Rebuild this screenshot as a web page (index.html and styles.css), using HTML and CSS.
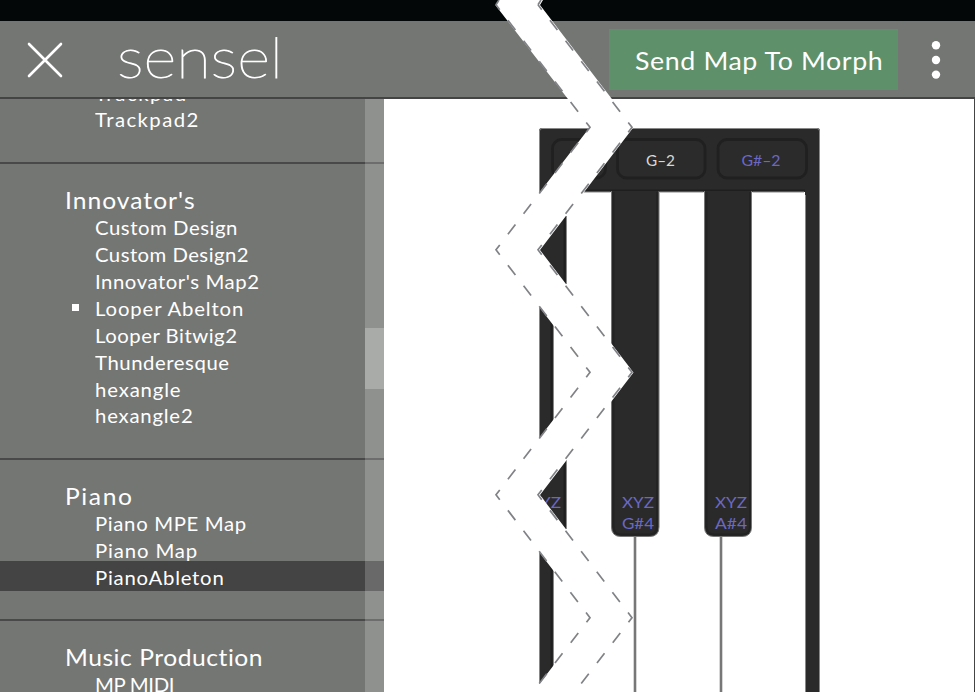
FILE: index.html
```html
<!DOCTYPE html>
<html lang="en">
<head>
<meta charset="utf-8">
<title>Sensel</title>
<link rel="stylesheet" href="styles.css">
</head>
<body>
<div class="app">
  <div class="topbar"></div>
  <header class="header">
    <svg class="close" width="36" height="36" viewBox="0 0 36 36"><path d="M2 2 34 34M34 2 2 34"/></svg>
    <svg class="logo" width="180" height="74" viewBox="0 0 180 74"><text x="0" y="56" textLength="166" lengthAdjust="spacingAndGlyphs">sensel</text></svg>
    <button class="send"><span data-width="247">Send Map To Morph</span></button>
    <svg class="more" width="10" height="40" viewBox="0 0 10 40"><circle cx="5" cy="5.2" r="4.2"/><circle cx="5" cy="20" r="4.2"/><circle cx="5" cy="34.6" r="4.2"/></svg>
  </header>
  <div class="body">
    <aside class="sidebar">
      <section class="group first">
        <ul>
          <li><span data-width="92">Trackpad</span></li>
          <li><span data-width="104">Trackpad2</span></li>
        </ul>
      </section>
      <section class="group">
        <h2><span data-width="130">Innovator's</span></h2>
        <ul>
          <li><span data-width="142">Custom Design</span></li>
          <li><span data-width="153">Custom Design2</span></li>
          <li><span data-width="164">Innovator's Map2</span></li>
          <li class="current"><span data-width="148">Looper Abelton</span></li>
          <li><span data-width="142">Looper Bitwig2</span></li>
          <li><span data-width="134">Thunderesque</span></li>
          <li><span data-width="85">hexangle</span></li>
          <li><span data-width="97">hexangle2</span></li>
        </ul>
      </section>
      <section class="group">
        <h2><span data-width="68">Piano</span></h2>
        <ul>
          <li><span data-width="151">Piano MPE Map</span></li>
          <li><span data-width="102">Piano Map</span></li>
          <li class="selected"><span data-width="129">PianoAbleton</span></li>
        </ul>
      </section>
      <section class="group">
        <h2><span data-width="198">Music Production</span></h2>
        <ul>
          <li><span data-width="78">MP MIDI</span></li>
        </ul>
      </section>
      <div class="scroll"><div class="thumb"></div></div>
    </aside>
    <main class="stage">
      <svg class="piano" width="590" height="593" viewBox="384 99 590 593">
        <path class="case" d="M539 192V131q0-3 3-3H817q3 0 3 3V692H805V192Z"/>
        <path class="case" d="M539 190H566V300H553V450H566V540H553V684H539Z"/>
        <path class="shade" d="M551.500 300V450M551.500 540V684M564.500 192V300M564.500 450V540M539 190.500H805"/>
        <path class="edge" d="M539.500 684V131q0-2.500 2.500-2.500H817q2.500 0 2.500 2.500V692M553.500 300V450M553.500 540V684M566.500 216V284M566.500 460V529M805.500 692V195"/>
        <rect class="pad" x="552.500" y="139.500" width="53" height="38.500" rx="9"/>
        <rect class="pad" x="617.500" y="139.500" width="87.500" height="38.500" rx="9"/>
        <rect class="pad" x="718" y="139.500" width="88.500" height="38.500" rx="9"/>
        <path class="gap" d="M635 530V692M721 530V692"/>
        <path class="key" d="M611.500 191V527q0 9.500 9.500 9.500H649.500q9.500 0 9.500-9.500V191"/>
        <path class="key" d="M704.500 191V527q0 9.500 9.500 9.500H742q9.500 0 9.500-9.500V191"/>
        <path class="shade soft" d="M613.500 192V526q0 8.500 8 8.500H649q8 0 8-8.500V192M706.500 192V526q0 8.500 8 8.500H742q8 0 8-8.500V192"/>
        <path class="edge" d="M566 192H610.500M660 192H703.500M752.500 192H804"/>
        <g class="label">
          <text class="light" x="646" y="166" textLength="29" lengthAdjust="spacingAndGlyphs">G–2</text>
          <text x="741.500" y="166" textLength="39" lengthAdjust="spacingAndGlyphs">G#–2</text>
          <text x="529" y="508" textLength="32" lengthAdjust="spacingAndGlyphs">XYZ</text>
          <text x="622" y="508" textLength="32" lengthAdjust="spacingAndGlyphs">XYZ</text>
          <text x="622" y="529" textLength="32" lengthAdjust="spacingAndGlyphs">G#4</text>
          <text x="715" y="508" textLength="32" lengthAdjust="spacingAndGlyphs">XYZ</text>
          <text x="715" y="529" textLength="32" lengthAdjust="spacingAndGlyphs">A#4</text>
        </g>
      </svg>
    </main>
  </div>
  <svg class="tear" width="975" height="692" viewBox="0 0 975 692">
    <path class="strip" d="M499 0 495.300 5 589.800 127.300 495.300 250 589.800 372.500 495.300 495 589.800 618 537 687H580L633.500 618 540 495 633.500 372.500 540 250 633.500 127.300 540 5 543 0Z"/>
    <path class="dash" d="M496 4.800 590 127.300 496 249.800 590 372.300 496 494.800 590 617.800 538 685"/>
    <path class="dash" d="M538 4.800 632 127.300 538 249.800 632 372.300 538 494.800 632 617.800 580 685"/>
    <path class="tick" d="M499 0 496 4.800M541 0 538 4.800"/>
  </svg>
</div>
<script src="fit.js"></script>
</body>
</html>
```
FILE: styles.css
```css
* { box-sizing: border-box; }
body {
  margin: 0;
  background: #fff;
  color: #fff;
  font-family: Lato, "Open Sans", sans-serif;
}
.app {
  position: relative;
  display: flex;
  flex-direction: column;
  width: 975px;
  height: 692px;
  overflow: hidden;
}
.topbar { flex: 0 0 21px; background: #030708; }
.header {
  flex: 0 0 78px;
  display: flex;
  align-items: center;
  padding: 0 38px 0 27px;
  background: #747674;
  border-bottom: 2px solid #444;
}
.close { fill: none; stroke: #fff; stroke-width: 2.6; stroke-linecap: round; margin-top: 2px; }
.logo { margin-left: 54px; }
.logo text { font-size: 56px; font-weight: 200; fill: #fff; stroke: #fff; stroke-width: .9; }
.send {
  width: 289px;
  height: 61px;
  margin: 0 0 0 auto;
  padding: 2px 0 0 26px;
  border: 0;
  background: #5e9069;
  color: #fff;
  font: 400 25px Lato, sans-serif;
  text-align: left;
  white-space: nowrap;
}
[data-width] {
  display: inline-block;
  transform: scaleX(1.07);
  transform-origin: 0 50%;
}
.more { margin-left: 33px; margin-top: 1px; fill: #fff; margin-right: -4px; }
.body { flex: 1; display: flex; min-height: 0; }
.sidebar {
  position: relative;
  width: 384px;
  overflow: hidden;
  background: #747674;
}
.group { border-top: 2px solid #484948; padding: 23px 0 28.500px; white-space: nowrap; }
.group.first { border: 0; padding-top: 0; margin-top: -19.500px; }
.group h2 {
  margin: 0;
  padding-left: 65px;
  font-size: 23px;
  font-weight: 400;
  line-height: 27px;
}
.group ul { margin: 0; padding: 0; list-style: none; }
.group li {
  position: relative;
  height: 26.950px;
  padding-left: 95px;
  font-size: 19px;
  line-height: 27px;
}
.current::before {
  content: "";
  position: absolute;
  left: 72px;
  top: 9px;
  width: 7px;
  height: 7px;
  background: #fff;
}
.group .selected {
  height: 30px;
  margin: -2.500px 0 -.500px;
  padding-top: 2.500px;
  background: #444;
}
.scroll {
  position: absolute;
  top: 0;
  right: 0;
  bottom: 0;
  width: 19px;
  padding-top: 229px;
  background: rgba(255, 255, 255, .2);
}
.thumb { height: 61px; background: rgba(255, 255, 255, .24); }
.stage { flex: 1; border-right: 1px solid #444; background: #fff; }
.piano { display: block; }
.case, .key { fill: #2a2a2a; }
.key { stroke: #777; stroke-width: 1; }
.shade { fill: none; stroke: #1e1e1e; stroke-width: 2; }
.shade.soft { stroke: #232323; }
.edge { fill: none; stroke: #888; stroke-width: 1; }
.pad { fill: #2b2b2b; stroke: #202020; stroke-width: 2.800; }
.gap { stroke: #777; stroke-width: 2.600; }
.label { font-size: 15.500px; fill: #6b68c4; }
.label .light { fill: #d8d8d8; }
.tear { position: absolute; inset: 0; pointer-events: none; }
.strip { fill: #fff; }
.dash { fill: none; stroke: #808285; stroke-width: 1.700; stroke-dasharray: 12.300 13.435; stroke-dashoffset: 6.150; }
.tick { stroke: #808285; stroke-width: 1.700; }
```
FILE: fit.js
```js
document.querySelectorAll('[data-width]').forEach(function (el) {
  var stretch = 1.07;
  var spacing = ((Number(el.dataset.width) + 1) / stretch - el.offsetWidth) / el.textContent.length;
  el.style.letterSpacing = spacing.toFixed(3) + 'px';
});
```
